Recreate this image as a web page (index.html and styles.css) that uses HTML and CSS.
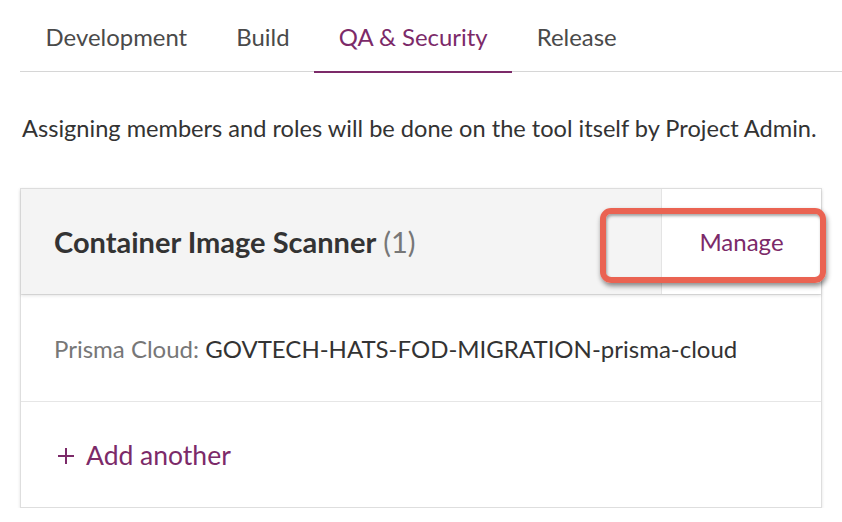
FILE: index.html
```html
<!DOCTYPE html>
<html>
<head>
<meta charset="utf-8">
<link rel="stylesheet" href="styles.css">
</head>
<body>
<div class="page">
  <nav class="tabs">
    <div class="tab">Development</div>
    <div class="tab">Build</div>
    <div class="tab active">QA &amp; Security</div>
    <div class="tab">Release</div>
  </nav>
  <p class="intro">Assigning members and roles will be done on the tool itself by Project Admin.</p>
  <div class="card">
    <div class="card-header">
      <div class="title">Container Image Scanner <span class="count">(1)</span></div>
      <div class="manage">Manage<span class="highlight"></span></div>
    </div>
    <div class="row">
      <span class="label">Prisma Cloud:</span>&nbsp;<span class="value">GOVTECH-HATS-FOD-MIGRATION-prisma-cloud</span>
    </div>
    <div class="row add">
      <svg class="plus" width="18" height="18" viewBox="0 0 18 18"><path d="M9 1v16M1 9h16" stroke="#7c2a69" stroke-width="2" fill="none"/></svg>
      <span>Add another</span>
    </div>
  </div>
</div>
</body>
</html>
```
FILE: styles.css
```css
html, body {
  margin: 0;
  padding: 0;
  background: #fff;
}
body {
  font-family: Lato, "Open Sans", sans-serif;
  color: #333;
}
.page {
  padding: 0 0 0 20px;
}
.tabs {
  display: flex;
  border-bottom: 1px solid #d6d6d6;
  height: 72px;
  box-sizing: border-box;
  padding-left: 1px;
}
.tab {
  font-size: 23.9px;
  color: #4a4a4a;
  padding: 22px 24.6px 0;
  box-sizing: border-box;
  height: 72px;
  line-height: 30px;
}
.tab.active {
  color: #7c2a69;
  border-bottom: 2px solid #7c2a69;
  height: 73px;
}
.intro {
  margin: 41px 0 0 2px;
  font-size: 23.6px;
  line-height: 30px;
  color: #333;
}
.card {
  margin-top: 45px;
  width: 802px;
  border: 1px solid #dedede;
  box-sizing: border-box;
  box-shadow: 0 1px 3px rgba(0,0,0,0.12);
}
.card-header {
  display: flex;
  height: 105px;
  background: #f4f4f4;
  box-shadow: 0 2px 3px rgba(0,0,0,0.1);
  position: relative;
}
.title {
  flex: 1;
  display: flex;
  align-items: center;
  padding-left: 33px;
  font-size: 29px;
  font-weight: bold;
  color: #333;
  gap: 7px;
}
.count {
  font-weight: normal;
  color: #777;
}
.manage {
  width: 159px;
  background: #fff;
  border-left: 1px solid #e4e4e4;
  display: flex;
  align-items: center;
  justify-content: center;
  font-size: 24px;
  color: #7c2a69;
  position: relative;
}
.highlight {
  position: absolute;
  left: -62px;
  top: 19px;
  width: 226px;
  height: 75px;
  box-sizing: border-box;
  border: 6px solid #ea6352;
  border-radius: 11px;
  box-shadow: 1px 3px 5px rgba(0,0,0,0.45), inset 1px 2px 3px rgba(0,0,0,0.35);
}
.row {
  height: 106px;
  display: flex;
  align-items: center;
  padding-left: 33px;
  font-size: 24px;
  border-top: 1px solid #e6e6e6;
}
.row:first-of-type { border-top: none; }
.label { color: #777; }
.value { color: #333; }
.add {
  color: #7c2a69;
  font-size: 26.5px;
  height: 105px;
  border-top: 1px solid #e6e6e6;
  padding-left: 36px;
  gap: 11px;
}
.plus {
  flex: none;
  margin-top: 2px;
}
```
